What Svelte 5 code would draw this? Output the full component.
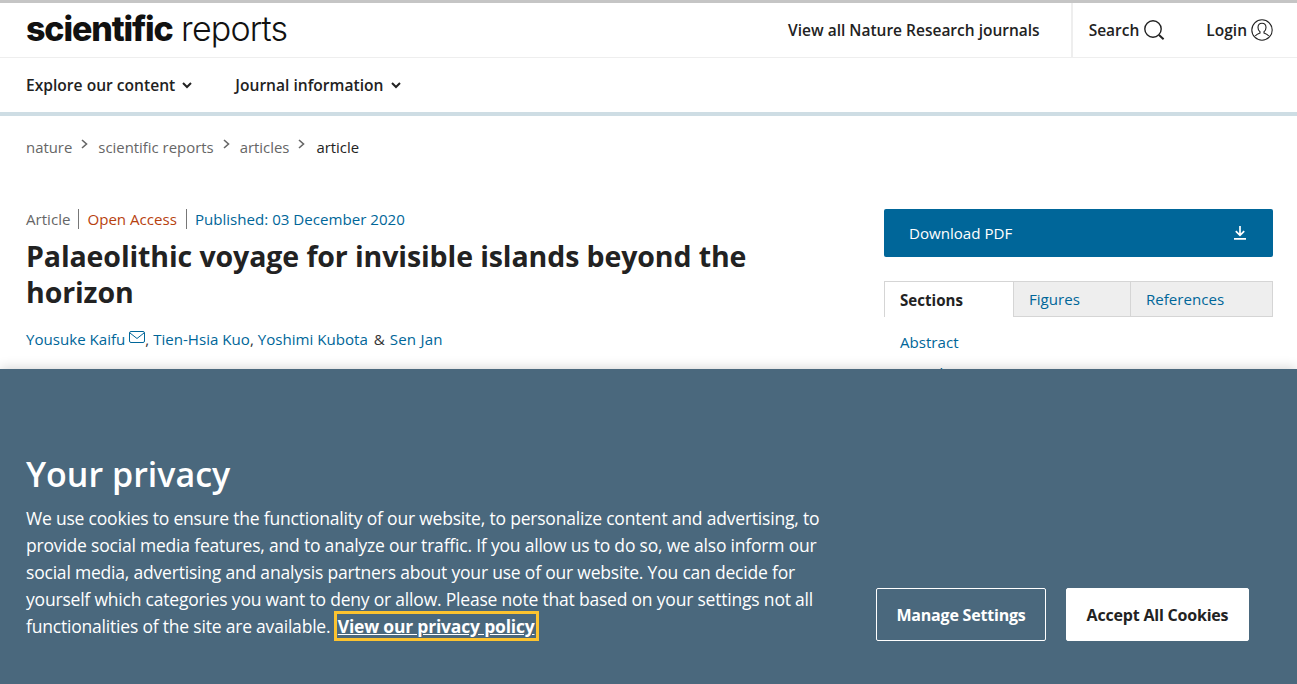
<script>
    const crumbs = ["nature", "scientific reports", "articles"];
    const tabs = ["Figures", "References"];
</script>

<div class="page">
    <header class="top">
        <a class="logo" href="#top"><b>scientific</b> <span>reports</span></a>
        <div class="top-links">
            <a class="all-journals" href="#top">View all Nature Research journals</a>
            <div class="tools">
                <a href="#top">Search
                    <svg width="22" height="22" viewBox="0 0 22 22" fill="none" stroke="#222" stroke-width="1.4">
                        <circle cx="10" cy="10" r="8.2" />
                        <path d="M16 16l4.6 4.2" stroke-width="2" />
                    </svg>
                </a>
                <a href="#top">Login
                    <svg width="22" height="22" viewBox="0 0 22 22" fill="none" stroke="#222" stroke-width="1.1">
                        <circle cx="11" cy="11" r="10.2" />
                        <path d="M11 4.2c-2.6 0-4 2-4 4.2 0 2 1 3.6 2 4.4v1.2c-2 .7-3.8 1.7-4.8 3M11 4.2c2.6 0 4 2 4 4.2 0 2-1 3.6-2 4.4v1.2c2 .7 3.8 1.7 4.8 3" />
                    </svg>
                </a>
            </div>
        </div>
    </header>

    <nav class="menu">
        <a href="#top">Explore our content
            <svg width="10" height="7" viewBox="0 0 10 7" fill="none" stroke="#222" stroke-width="2"><path d="M1 1l4 4 4-4" /></svg>
        </a>
        <a href="#top">Journal information
            <svg width="10" height="7" viewBox="0 0 10 7" fill="none" stroke="#222" stroke-width="2"><path d="M1 1l4 4 4-4" /></svg>
        </a>
    </nav>

    <ol class="crumbs">
        {#each crumbs as c}
            <li>
                <a href="#top">{c}</a>
                <svg width="7" height="10" viewBox="0 0 7 10" fill="none" stroke="#666" stroke-width="1.6"><path d="M1 1l4.5 4L1 9" /></svg>
            </li>
        {/each}
        <li class="current">article</li>
    </ol>

    <main class="layout">
        <article>
            <ul class="meta">
                <li>Article</li>
                <li class="open">Open Access</li>
                <li class="date">Published: 03 December 2020</li>
            </ul>
            <h1>Palaeolithic voyage for invisible islands beyond the horizon</h1>
            <p class="authors">
                <a href="#top">Yousuke Kaifu</a>
                <svg class="mail" width="16" height="13" viewBox="0 0 16 13" fill="none" stroke="#069" stroke-width="1"><rect x=".5" y=".5" width="15" height="11" rx="1.5" /><path d="M1 2l7 5.5L15 2" /></svg><span class="sep">,</span><a href="#top">Tien-Hsia Kuo</a><span class="sep">,</span><a href="#top">Yoshimi Kubota</a>
                <span class="amp">&amp;</span>
                <a class="last" href="#top">Sen Jan</a>
            </p>
        </article>
        <aside>
            <a class="download" href="#top">
                Download PDF
                <svg width="12" height="14" viewBox="0 0 12 14" fill="none" stroke="#fff" stroke-width="1.7"><path d="M6 0v9M1.8 5.2L6 9.4l4.2-4.2M0 12.8h12" /></svg>
            </a>
            <div class="tabs">
                <span class="tab active">Sections</span>
                {#each tabs as t}
                    <a class="tab" href="#top">{t}</a>
                {/each}
            </div>
            <ul class="sections">
                <li><a href="#top">Abstract</a></li>
                <li><a href="#top">Introduction</a></li>
            </ul>
        </aside>
    </main>

    <section class="cookie">
        <div class="cookie-text">
            <h2>Your privacy</h2>
            <p>We use cookies to ensure the functionality of our website, to personalize content and advertising, to provide social media features, and to analyze our traffic. If you allow us to do so, we also inform our social media, advertising and analysis partners about your use of our website. You can decide for yourself which categories you want to deny or allow. Please note that based on your settings not all functionalities of the site are available. <a href="#top">View our privacy policy</a></p>
        </div>
        <div class="cookie-actions">
            <button class="manage">Manage Settings</button>
            <button class="accept">Accept All Cookies</button>
        </div>
    </section>
</div>

<style>
    :global(body) {
        margin: 0;
        background: #fff;
        overflow: hidden;
    }

    .page {
        font-family: "Open Sans", "Noto Sans", sans-serif;
        color: #222;
        font-size: 15.1px;
        height: 684px;
        overflow: hidden;
        position: relative;
    }

    a {
        text-decoration: none;
        color: inherit;
    }

    .top {
        display: flex;
        justify-content: space-between;
        align-items: stretch;
        height: 54px;
        border-top: 3px solid #c5c5c5;
        border-bottom: 1px solid #eee;
        padding: 0 24px 0 26px;
    }

    .logo {
        font-family: Inter, sans-serif;
        font-size: 34px;
        line-height: 52px;
        color: #111;
        letter-spacing: -1.15px;
        white-space: nowrap;
    }

    .logo b {
        font-weight: 800;
    }

    .logo span {
        font-weight: 300;
        letter-spacing: -0.85px;
    }

    .top-links {
        display: flex;
        align-items: center;
        font-weight: 600;
        font-size: 15.5px;
    }

    .all-journals {
        padding-right: 31px;
    }

    .tools {
        display: flex;
        align-items: center;
        gap: 41px;
        height: 100%;
        padding-left: 16px;
        border-left: 2px solid #eee;
    }

    .tools a {
        display: flex;
        align-items: center;
        gap: 4px;
    }

    .menu {
        display: flex;
        align-items: center;
        gap: 43px;
        height: 54px;
        padding-left: 26px;
        border-bottom: 4px solid #cedde4;
        font-weight: 600;
        font-size: 15.6px;
    }

    .menu svg {
        margin: 0 0 2px 3px;
    }

    .crumbs {
        display: flex;
        list-style: none;
        margin: 0;
        padding: 10px 0 0 26px;
        height: 41px;
        align-items: center;
        color: #666;
        font-size: 14.9px;
    }

    .crumbs li {
        display: flex;
        align-items: center;
    }

    .crumbs svg {
        margin: -6px 10px 0 9px;
    }

    .crumbs .current {
        color: #222;
        margin-left: 1px;
    }

    .layout {
        display: flex;
        justify-content: space-between;
        padding: 42px 24px 0 26px;
    }

    article {
        width: 740px;
    }

    .meta {
        display: flex;
        list-style: none;
        margin: 0;
        padding: 0;
        color: #666;
    }

    .meta li {
        line-height: 20px;
        padding: 0 8px;
        border-left: 1px solid #777;
    }

    .meta li:first-child {
        padding-left: 0;
        border: 0;
    }

    .meta .open {
        color: #b7410e;
        padding-right: 9px;
    }

    .meta .date {
        color: #069;
    }

    h1 {
        margin: 9px 0 0;
        font-size: 28.5px;
        line-height: 36px;
        font-weight: 700;
        letter-spacing: -0.1px;
        color: #222;
    }

    .authors {
        margin: 19px 0 0;
        line-height: 20px;
        color: #069;
    }

    .mail {
        vertical-align: 1px;
    }

    .sep,
    .amp {
        color: #333;
    }

    .sep {
        margin-right: 4px;
    }

    .amp {
        margin: 0 1px 0 2px;
    }

    .last {
        letter-spacing: 0.2px;
    }

    aside {
        width: 389px;
    }

    .download {
        display: flex;
        justify-content: space-between;
        align-items: center;
        height: 48px;
        padding: 0 27px 0 25px;
        background: #069;
        color: #fff;
        border-radius: 2px;
        box-sizing: border-box;
    }

    .tabs {
        display: flex;
        margin-top: 24px;
        height: 36px;
    }

    .tab {
        box-sizing: border-box;
        display: flex;
        align-items: center;
        padding-left: 15px;
        background: #eee;
        color: #069;
        border: 1px solid #d5d5d5;
        border-left: 0;
        width: 117px;
    }

    .tab:last-child {
        width: 142px;
    }

    .tab.active {
        width: 130px;
        background: #fff;
        color: #222;
        font-weight: 700;
        border-left: 1px solid #d5d5d5;
        border-bottom: 0;
    }

    .sections {
        list-style: none;
        margin: 15px 0 0;
        padding: 0 0 0 16px;
        color: #069;
    }

    .sections li {
        line-height: 20px;
        margin-bottom: 11px;
    }

    .cookie {
        position: absolute;
        left: 0;
        right: 0;
        bottom: 0;
        height: 315px;
        box-sizing: border-box;
        display: flex;
        justify-content: space-between;
        align-items: flex-end;
        padding: 0 48px 43px 26px;
        background: #4a687d;
        color: #fff;
        box-shadow: 0 0 12px rgba(0, 0, 0, 0.2);
    }

    .cookie-text {
        width: 815px;
        padding-bottom: 1px;
    }

    h2 {
        margin: 0 0 9px;
        font-size: 34px;
        line-height: 44px;
        font-weight: 600;
    }

    .cookie-text p {
        margin: 0;
        font-size: 17.5px;
        line-height: 27px;
        letter-spacing: -0.2px;
    }

    .cookie-text a {
        font-weight: 700;
        text-decoration: underline;
        outline: 3px solid #fcc32f;
        padding: 0 1px;
        margin-left: 2px;
    }

    .cookie-actions {
        display: flex;
        gap: 20px;
    }

    button {
        font-family: inherit;
        font-size: 16px;
        font-weight: 700;
        letter-spacing: -0.2px;
        height: 53px;
        border-radius: 2px;
        border: 1px solid #fff;
        cursor: pointer;
    }

    .manage {
        width: 170px;
        background: transparent;
        color: #fff;
    }

    .accept {
        width: 183px;
        background: #fff;
        color: #222;
    }
</style>
